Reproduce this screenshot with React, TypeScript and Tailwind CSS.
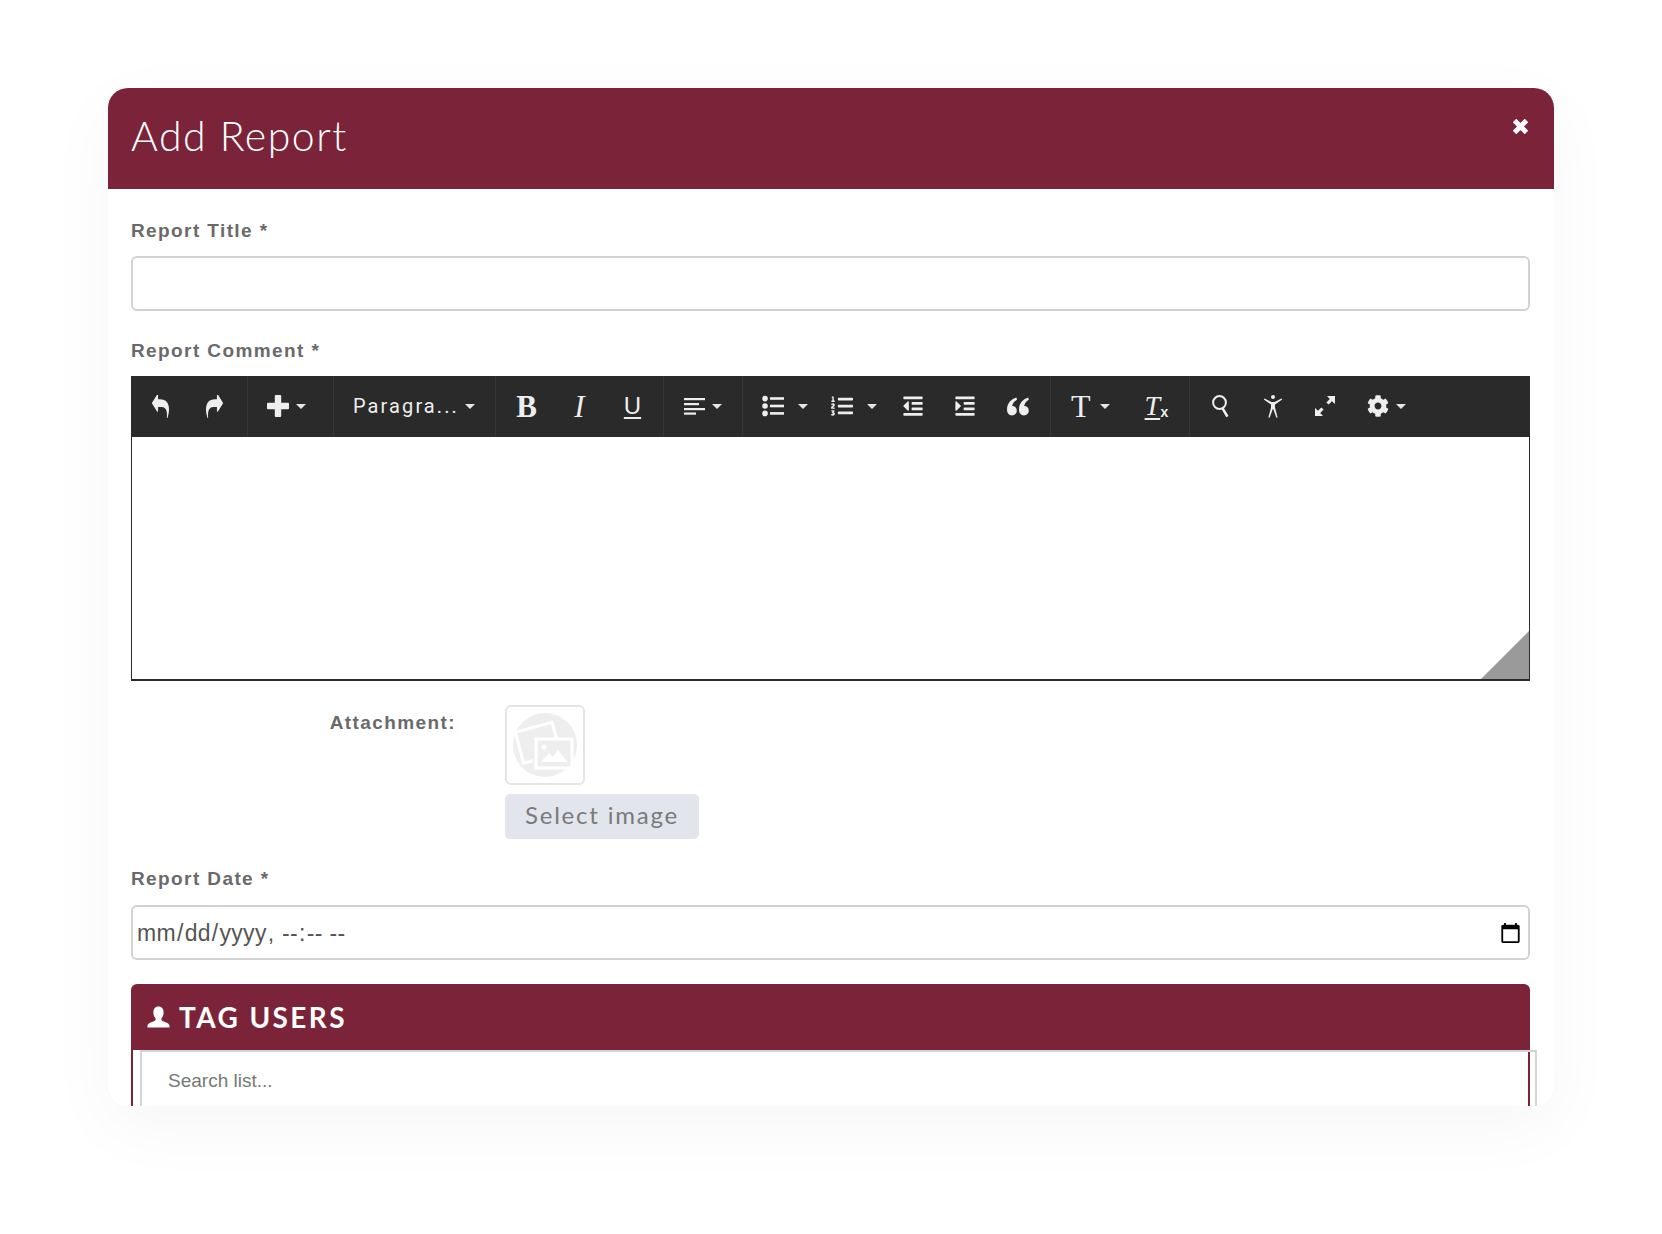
import React from "react";
import { FaListOl, FaOutdent, FaIndent, FaCog } from "react-icons/fa";

const Caret = ({ className = "" }: { className?: string }) => (
  <span className={`inline-block w-0 h-0 border-l-[5px] border-r-[5px] border-t-[5px] border-l-transparent border-r-transparent border-t-[#e6e6e6] ${className}`} />
);

const Btn = ({ children, w = "w-[53px]" }: { children: React.ReactNode; w?: string }) => (
  <div className={`${w} h-full flex items-center justify-center text-[#eeeeee] shrink-0`}>{children}</div>
);

const Group = ({ w, children, pl = "pl-0", last = false }: { w: string; children: React.ReactNode; pl?: string; last?: boolean }) => (
  <div className={`${w} ${pl} h-full flex items-center shrink-0 ${last ? "" : "border-r border-[#363636]"}`}>{children}</div>
);

const REPLY =
  "M1792 1120q0 166-127 451-3 7-10.5 24t-13.5 30-13 22q-12 17-28 17-15 0-23.5-10t-8.5-25q0-9 2.5-26.5t2.5-23.5q5-68 5-123 0-101-17.5-181t-48.5-138.5-80-101-105.5-69.5-133-42.5-154-21.5-175.5-6h-224v256q0 26-19 45t-45 19-45-19l-512-512q-19-19-19-45t19-45l512-512q19-19 45-19t45 19 19 45v256h224q713 0 875 403 53 134 53 333z";

const ReplyIcon = ({ flip = false }: { flip?: boolean }) => (
  <svg width="17" height="23" viewBox="0 100 1792 1536" preserveAspectRatio="none" fill="#eeeeee" className={flip ? "-scale-x-100" : ""}>
    <path d={REPLY} />
  </svg>
);

const PlusIcon = () => (
  <svg width="22" height="22" viewBox="0 0 22 22" fill="#eeeeee">
    <rect x="0" y="7.8" width="22" height="6.4" rx="1" />
    <rect x="7.8" y="0" width="6.4" height="22" rx="1" />
  </svg>
);

const AlignIcon = () => (
  <svg width="22" height="18" viewBox="0 0 22 18" fill="#eeeeee">
    <rect x="0" y="1" width="21" height="2.2" />
    <rect x="0" y="6" width="15" height="2.2" />
    <rect x="0" y="11" width="21" height="2.2" />
    <rect x="0" y="15.5" width="12" height="2.2" />
  </svg>
);

const BulletIcon = () => (
  <svg width="22" height="22" viewBox="0 0 22 22" fill="#eeeeee">
    <circle cx="3" cy="3.6" r="2.8" />
    <circle cx="3" cy="11" r="2.8" />
    <circle cx="3" cy="18.4" r="2.8" />
    <rect x="8" y="2.2" width="14" height="2.6" />
    <rect x="8" y="9.7" width="14" height="2.6" />
    <rect x="8" y="17.1" width="14" height="2.6" />
  </svg>
);

const QuoteIcon = () => (
  <svg width="22" height="19" viewBox="0 0 22 19" fill="#eeeeee">
    <path d="M9.4 0.6 C4.6 2 0 6 0 12.8 C0 16.2 2 18.4 5 18.4 C7.8 18.4 9.8 16.4 9.8 13.6 C9.8 10.8 7.8 9 5.2 9 C5.6 6.6 7.2 4.4 10 2.8 Z" />
    <path d="M21.2 0.6 C16.4 2 12 6 12 12.8 C12 16.2 14 18.4 17 18.4 C19.8 18.4 21.8 16.4 21.8 13.6 C21.8 10.8 19.8 9 17.2 9 C17.6 6.6 19 4.4 21.8 2.8 Z" />
  </svg>
);

const SearchIcon = () => (
  <svg width="20" height="24" viewBox="0 0 20 24" fill="none" stroke="#eeeeee" strokeWidth="2">
    <circle cx="8.5" cy="8.5" r="6.4" />
    <path d="M11.6 14.4 L16.4 22.6" strokeWidth="2.6" />
  </svg>
);

const AccessIcon = () => (
  <svg width="20" height="24" viewBox="0 0 20 24" fill="#eeeeee">
    <circle cx="10" cy="3" r="2" />
    <path d="M0.8 5.6 L1.6 4.6 L8.4 8 H11.6 L18.4 4.6 L19.2 5.6 L12 10.4 L12 13.4 L14.6 23.4 L13.4 23.8 L10.2 15 H9.8 L6.6 23.8 L5.4 23.4 L8 13.4 L8 10.4 Z" />
  </svg>
);

const ExpandIcon = () => (
  <svg width="22" height="22" viewBox="0 0 22 22" fill="#eeeeee">
    <path d="M13 1 H21 V9 L18 6.2 L14.6 9.6 L12.4 7.4 L15.8 4 Z" />
    <path d="M9 21 H1 V13 L4 15.8 L7.4 12.4 L9.6 14.6 L6.2 18 Z" />
  </svg>
);

const CloseIcon = () => (
  <svg width="15" height="15" viewBox="0 0 15 15" fill="none" stroke="#ffffff" strokeWidth="5">
    <path d="M1.5 1.5 L13.5 13.5 M13.5 1.5 L1.5 13.5" />
  </svg>
);

const UserIcon = () => (
  <svg width="23" height="22" viewBox="0 0 23 22" fill="#ffffff">
    <path d="M11.5 0.5 C15 0.5 16.6 3 16.6 6.4 C16.6 9 15.6 11 14.4 12.4 C14.2 13.6 14.6 14.6 16 15.2 C18.6 16.4 21.6 17 22.4 19 L22.6 21.6 H0.4 L0.6 19 C1.4 17 4.4 16.4 7 15.2 C8.4 14.6 8.8 13.6 8.6 12.4 C7.4 11 6.4 9 6.4 6.4 C6.4 3 8 0.5 11.5 0.5 Z" />
  </svg>
);

const PlaceholderIcon = () => (
  <svg width="64" height="64" viewBox="0 0 64 64">
    <circle cx="32" cy="32" r="32" fill="#eeeeee" />
    <g transform="rotate(-15 28 30)">
      <rect x="6" y="13" width="38" height="32" fill="none" stroke="#ffffff" strokeWidth="3" />
    </g>
    <rect x="20" y="25" width="40" height="31" fill="#eeeeee" />
    <rect x="23" y="26" width="36" height="29" fill="none" stroke="#ffffff" strokeWidth="3.2" />
    <circle cx="31" cy="34" r="2.6" fill="#ffffff" />
    <path d="M28 49 L36 40 L40 44 L45 37 L55 49 Z" fill="#ffffff" />
  </svg>
);

const labelClass =
  "block h-[26px] leading-[26px] text-[19px] font-bold tracking-[1.4px] text-[#6a6a6a] font-['Liberation_Sans',Arial,sans-serif]";

export default function App() {
  return (
    <div className="w-full min-h-[1234px] bg-white pt-[88px] pl-[108px]">
      <div className="w-[1446px] h-[1018px] bg-white rounded-[20px] overflow-hidden shadow-[0_20px_70px_rgba(0,0,0,0.04)]">
        <div className="h-[101px] bg-[#7b2338] pl-[23px] pr-[26px] flex justify-between items-start">
          <h1 className="mt-[24px] text-[41px] leading-[48px] font-light tracking-[1.5px] text-white font-['Lato',sans-serif]">Add Report</h1>
          <div className="mt-[31px]"><CloseIcon /></div>
        </div>
        <div className="pl-[23px] pr-[24px] pt-[29px]">
          <label className={labelClass}>Report Title *</label>
          <input type="text" className="block mt-[12px] w-full h-[55px] border-2 border-[#d2d2d2] rounded-[6px] bg-white" />
          <label className={`${labelClass} mt-[27px]`}>Report Comment *</label>
          <div className="mt-[12px] h-[305px] border-x border-b-2 border-[#2a2a2a] bg-white relative overflow-hidden">
            <div className="h-[61px] bg-[#2a2a2a] flex items-center border-b border-[#2a2a2a] -mx-px">
              <Group w="w-[117px]" pl="pl-[2px]">
                <Btn w="w-[54px]"><ReplyIcon /></Btn>
                <Btn w="w-[54px]"><ReplyIcon flip /></Btn>
              </Group>
              <Group w="w-[86px]" pl="pl-[19px]">
                <PlusIcon />
                <Caret className="ml-[7px]" />
              </Group>
              <Group w="w-[162px]" pl="pl-[19px]">
                <span className="text-[20px] tracking-[2.1px] text-[#eeeeee] font-['Roboto',sans-serif]">Paragra...</span>
                <Caret className="ml-[6px]" />
              </Group>
              <Group w="w-[168px]" pl="pl-[4px]">
                <Btn><span className="text-[31px] font-bold leading-none text-[#eeeeee] font-['Liberation_Serif',serif]">B</span></Btn>
                <Btn><span className="text-[31px] italic leading-none text-[#eeeeee] font-['Liberation_Serif',serif]">I</span></Btn>
                <Btn><span className="text-[24px] underline decoration-2 underline-offset-[3px] leading-none text-[#eeeeee] font-['Liberation_Sans',sans-serif]">U</span></Btn>
              </Group>
              <Group w="w-[79px]" pl="pl-[20px]">
                <AlignIcon />
                <Caret className="ml-[6px]" />
              </Group>
              <Group w="w-[308px]" pl="pl-[19px]">
                <BulletIcon />
                <Caret className="ml-[14px]" />
                <FaListOl size={22} className="ml-[23px] text-[#eeeeee]" />
                <Caret className="ml-[14px]" />
                <FaOutdent size={22} className="ml-[25px] text-[#eeeeee]" />
                <FaIndent size={22} className="ml-[30px] text-[#eeeeee]" />
                <span className="ml-[31px]"><QuoteIcon /></span>
              </Group>
              <Group w="w-[139px]" pl="pl-[20px]">
                <span className="text-[32px] leading-none text-[#eeeeee] font-['Liberation_Serif',serif]">T</span>
                <Caret className="ml-[9px]" />
                <span className="ml-[35px] relative text-[28px] italic leading-none underline decoration-2 underline-offset-[3px] text-[#eeeeee] font-['Liberation_Serif',serif]">T<span className="absolute left-[16px] top-[13px] text-[14px] not-italic font-bold font-['Liberation_Sans',sans-serif] inline-block">x</span></span>
              </Group>
              <Group w="w-[341px]" pl="pl-[21px]" last>
                <SearchIcon />
                <span className="ml-[32px]"><AccessIcon /></span>
                <span className="ml-[31px]"><ExpandIcon /></span>
                <FaCog size={22} className="ml-[31px] text-[#eeeeee]" />
                <Caret className="ml-[7px]" />
              </Group>
            </div>
            <svg className="absolute right-0 bottom-0" width="48" height="48" viewBox="0 0 48 48"><path d="M48 0 V48 H0 Z" fill="#9a9a9a" /></svg>
          </div>
          <div className="mt-[24px] flex items-start">
            <label className={`${labelClass} w-[325px] text-right mt-[5px]`}>Attachment:</label>
            <div className="ml-[49px]">
              <div className="w-[80px] h-[80px] border-2 border-[#e4e4e4] rounded-[6px] flex items-center justify-center">
                <PlaceholderIcon />
              </div>
              <button className="mt-[9px] block w-[194px] h-[45px] rounded-[5px] bg-[#e2e5ec] pb-[3px] text-[24px] tracking-[1.8px] text-[#7a7a7a] font-['Lato',sans-serif]">Select image</button>
            </div>
          </div>
          <label className={`${labelClass} mt-[27px]`}>Report Date *</label>
          <input type="datetime-local" className="block mt-[13px] w-full h-[55px] border-2 border-[#d2d2d2] rounded-[6px] bg-white pl-[3px] pt-[1px] pr-[4px] text-[23px] tracking-[0.3px] text-[#555555] font-['Liberation_Sans',sans-serif]" />
          <div className="mt-[24px] relative">
            <div className="h-[66px] bg-[#7b2338] rounded-t-[6px] flex items-center pl-[16px]">
              <UserIcon />
              <span className="ml-[9px] text-[28px] font-bold tracking-[2.4px] text-white font-['Lato',sans-serif]">TAG USERS</span>
            </div>
            <div className="h-[80px] border-x-2 border-[#7b2338] pl-[7px]">
              <div className="h-full border-l-2 border-t-2 border-r-2 border-[#d4d4d4] -mr-[9px] pl-[26px]">
                <input type="text" placeholder="Search list..." className="w-[600px] h-[58px] text-[19px] placeholder:text-[#777777] outline-none font-['Liberation_Sans',sans-serif]" />
              </div>
            </div>
          </div>
        </div>
      </div>
    </div>
  );
}
